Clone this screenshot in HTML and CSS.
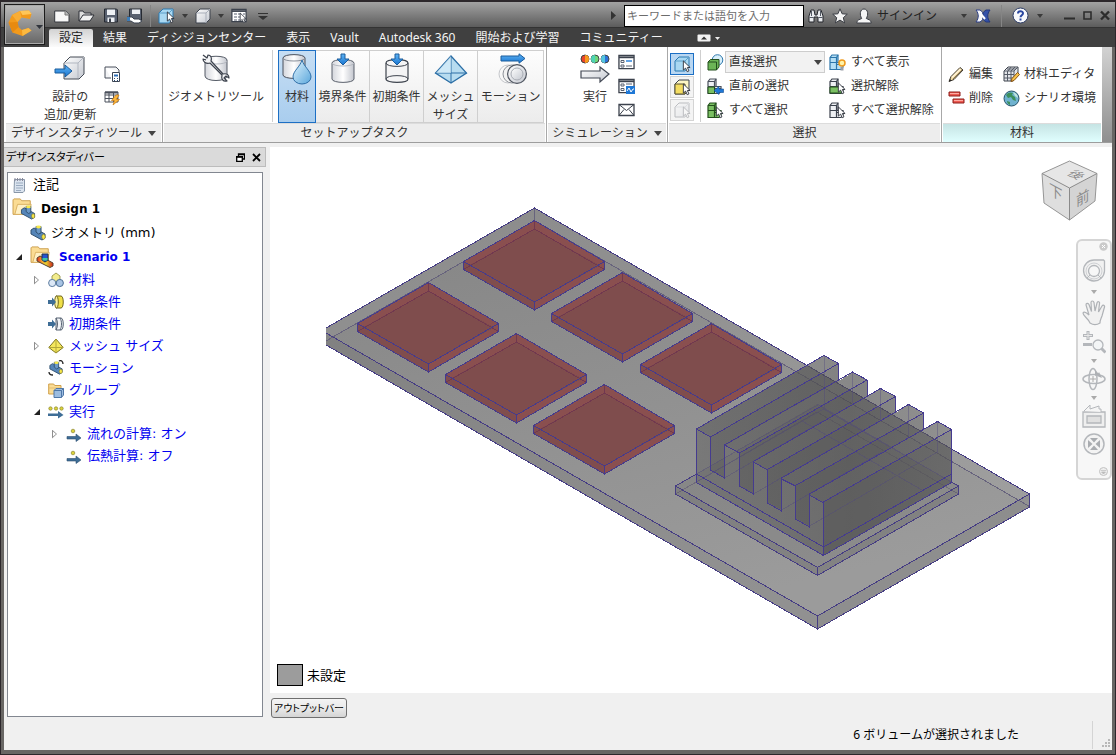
FILE: index.html
```html
<!DOCTYPE html>
<html lang="ja">
<head>
<meta charset="utf-8">
<title>Design 1</title>
<link rel="stylesheet" href="styles.css">
</head>
<body>
<svg class="defs" aria-hidden="true">
  <defs>
    <linearGradient id="gWhite" x1="0" y1="0" x2="1" y2="1"><stop offset="0" stop-color="#fff"/><stop offset="1" stop-color="#c4c8d0"/></linearGradient>
    <linearGradient id="gBlue" x1="0" y1="0" x2="0" y2="1"><stop offset="0" stop-color="#5fb4f5"/><stop offset="1" stop-color="#1874cf"/></linearGradient>
    <linearGradient id="gCyl" x1="0" y1="0" x2="1" y2="0"><stop offset="0" stop-color="#d4d6dc"/><stop offset=".5" stop-color="#fff"/><stop offset="1" stop-color="#c3c6ce"/></linearGradient>
    <linearGradient id="gDrop" x1="0" y1="0" x2="1" y2="1"><stop offset="0" stop-color="#e2f4fd"/><stop offset="1" stop-color="#5aa7dc"/></linearGradient>
    <linearGradient id="gRain" x1="0" y1="0" x2="1" y2="0"><stop offset="0" stop-color="#e03020"/><stop offset=".3" stop-color="#f5a030"/><stop offset=".55" stop-color="#e8d530"/><stop offset="1" stop-color="#d02018"/></linearGradient>
    <symbol id="cursor" viewBox="0 0 10 14"><path d="M1.500 .8V11l2.500-2.200 1.800 4 1.900-.9L6 8.100h3z" fill="#fff" stroke="#2b303a" stroke-width="1"/></symbol>
    <symbol id="cube" viewBox="0 0 16 16"><path d="M1 5 5 1h10v10l-4 4H1z" fill="url(#gWhite)" stroke="#3c424d" stroke-linejoin="round"/><path d="M1.500 5H11v10M11 5l4-4" fill="none" stroke="#a9afba"/></symbol>
    <symbol id="cubeBlue" viewBox="0 0 16 16"><path d="M1 5 5 1h10v10l-4 4H1z" fill="#a9d8f2" stroke="#2b78b0" stroke-linejoin="round"/><path d="M1.500 5H11v10M11 5l4-4" fill="none" stroke="#5c9fc9"/></symbol>
    <symbol id="pipe" viewBox="0 0 16 16"><path d="M1 5 4 3l11 6v4l-3 2L1 9z" fill="#5585b8" stroke="#31506f"/><path d="M6 1.500h5V8l-2.500 1L6 7z" fill="#6a98c8" stroke="#31506f"/><ellipse cx="8.500" cy="2" rx="2.500" ry="1.400" fill="#f7e84a"/><ellipse cx="13.500" cy="11.800" rx="1.700" ry="2.500" fill="#f7e84a" stroke="#8a7a20" stroke-width=".6"/></symbol>
    <symbol id="folder" viewBox="0 0 24 22"><path d="M1 18V2l1-1h7l1.500 2H20v15z" fill="#fbdc94" stroke="#c99b48"/><path d="M3 18 6 7h15l-2 11z" fill="#fff0c4" stroke="#d8ae5e"/></symbol>
    <symbol id="list" viewBox="0 0 18 16"><path d="M1 1h16v14H1z" fill="#fff" stroke="#3c424d" stroke-width="1.400"/><path d="M1 3h16" stroke="#3c424d" stroke-width="2"/></symbol>
    <symbol id="boxes" viewBox="0 0 17 17"><path d="M1 3.500l2-2.500h6v7.500h5l0 0V13l-2 2.500H1z" stroke-width="1.200"/><path d="M1 8.500h8M1 3.500h6.500L9 1M7.500 3.500v12M7.500 10.500H14" fill="none" stroke-width="1.200"/></symbol>
    <symbol id="step" viewBox="0 0 16 14"><circle cx="7" cy="3" r="1.800" fill="#dcd43a" stroke="#8a8430" stroke-width=".7"/><path d="M1 8.500h9V6l5 4-5 3.500V11H1z" fill="#3e6d96" stroke="#2c4f70" stroke-width=".6"/></symbol>
  </defs>
</svg>

<div class="window">
  <header class="head">
    <button class="app" aria-label="アプリケーション メニュー">
      <svg width="38" height="32" viewBox="0 0 38 32"><path d="M15 2 24 1.500 26.500 5 25 10l-8.500-1.500L12.500 13l1 5 3.500 3 6.500-2 3 2.500-9 5.500-10-3.500-4-10L7 6z" fill="#f29a1c"/><path d="M15 2l9-.5 2.500 3.500-9 1z" fill="#ffc658"/><path d="M7 6l8-4 1.500 6.500L12.500 13z" fill="#f8ad36"/><path d="M3.500 13.500l9-.5 1 5-6 5.500z" fill="#e88a10"/><path d="M17 21l6.500-2 3 2.500-9 5.500z" fill="#fcb940"/><path d="M31 16h7l-3.500 4z" fill="#30343c"/></svg>
    </button>
    <div class="titlebar">
      <div class="quick">
        <button aria-label="新規"><svg width="16" height="16"><path d="M.7 3h11L15 6.500V14H.7z" fill="#f7f7f7" stroke="#34373d"/><path d="M11 3v4h4" fill="#bbb" stroke="#777"/></svg></button>
        <button aria-label="開く"><svg width="17" height="16"><path d="M1 13V3h4l1.500 2H13v3" fill="#ddd" stroke="#2e3138"/><path d="M1 13 5 7h11l-4 6z" fill="#f1f1f1" stroke="#2e3138"/></svg></button>
        <button aria-label="保存"><svg width="16" height="16"><path d="M1.500 1h12l1 1v12h-13z" fill="#596170" stroke="#262a32"/><path d="M4 1.500h8V7H4zM4.500 9.500h7V14h-7z" fill="#eef1f5"/><path d="M6 10.500h2V14H6z" fill="#3d4450"/></svg></button>
        <button aria-label="名前を付けて保存"><svg width="16" height="16"><path d="M2.500 1h12v11h-12z" fill="#596170" stroke="#262a32"/><path d="M5 1.500h8V6H5z" fill="#eef1f5"/><path d="M0 9h5l2 2h5l3 2-3 2H7l-3-2H0z" fill="#fff" stroke="#3a4350"/><path d="M0 9h3v4H0z" fill="#3c7cb8"/></svg></button>
      </div>
      <span class="sep"></span>
      <div class="quick quick-b">
        <button aria-label="ボリューム選択"><svg width="17" height="16"><use href="#cubeBlue" width="16" height="16"/><use href="#cursor" x="8" y="3" width="9" height="13"/></svg></button>
        <button class="dd" aria-label="選択オプション"><i class="tri"></i></button>
        <button aria-label="表示スタイル"><svg width="16" height="16"><use href="#cube" width="16" height="16"/></svg></button>
        <button class="dd" aria-label="表示オプション"><i class="tri"></i></button>
        <button aria-label="一覧"><svg width="17" height="16"><use href="#list" width="16" height="15"/><path d="M3 6h3M3 9h3M3 12h3M7 6h3M7 9h2M7 12h2M12 6h2" stroke="#596170"/><use href="#cursor" x="8" y="4" width="8" height="12"/></svg></button>
        <button class="dd more" aria-label="カスタマイズ"><svg width="10" height="10"><path d="M0 2.500h10" stroke="#333"/><path d="M0 5h10L5 9z" fill="#333"/></svg></button>
      </div>
      <div class="info">
        <svg width="5" height="9"><path d="M0 0l5 4.500L0 9z" fill="#333"/></svg>
        <input class="search" type="text" aria-label="検索" placeholder="キーワードまたは語句を入力">
        <button aria-label="検索"><svg width="16" height="16"><path d="M1 8 3 2h3l1 5h2l1-5h3l2 6v6h-5V9H6v5H1z" fill="#e9ebee" stroke="#24272d"/><path d="M1.500 9.500h4M10.500 9.500h4M3.500 3v5M12.500 3v5" stroke="#555b66"/></svg></button>
        <button aria-label="お気に入り"><svg width="16" height="16"><path d="M8 .8l2.100 5 5.200.4-4 3.500 1.300 5.200L8 12.100l-4.600 2.800 1.300-5.200-4-3.500 5.200-.4z" fill="#f5f5f5" stroke="#3a3d44"/></svg></button>
        <button class="signin"><svg width="16" height="16"><path d="M.7 15c0-3 3-3.500 5-4.500C3.500 7 3.800 1 8 1s4.500 6 2.300 9.500c2 1 5 1.500 5 4.500z" fill="#f5f5f5" stroke="#3a3d44"/></svg>サインイン</button>
        <i class="tri tri-signin"></i>
        <button aria-label="Exchange"><svg width="16" height="14"><path d="M1 1h4c3 2 3 3 3 6s0 4-3 6H1c3-4 3-8 0-12z" fill="#f6f7fb" stroke="#2c3f86"/><path d="M15 1h-4C8 3 8 4 8 7s0 4 3 6h4c-3-4-3-8 0-12z" fill="#3451a8" stroke="#24387a"/><path d="M5 4l5 6" stroke="#fff" stroke-width="2"/></svg></button>
        <span class="sep sep-help"></span>
        <button aria-label="ヘルプ"><svg width="17" height="17"><circle cx="8.500" cy="8.500" r="7.500" fill="#f7f8fb" stroke="#2d3c66"/><path d="M6 6.500C6 3.500 11 3.500 11 6.300c0 1.900-2.500 1.900-2.500 3.900M8.500 11.500v2" fill="none" stroke="#2946a0" stroke-width="2"/></svg></button>
        <i class="tri tri-help"></i>
        <div class="winbtns">
          <button aria-label="最小化"><svg width="11" height="11"><path d="M0 8.500h11" stroke="#2d2d2d" stroke-width="2"/></svg></button>
          <button aria-label="最大化"><svg width="9" height="11"><path d="M1 2h7v7H1z" fill="none" stroke="#2d2d2d" stroke-width="1.600"/></svg></button>
          <button aria-label="閉じる"><svg width="10" height="11"><path d="M1 1.500l8 8M9 1.500l-8 8" stroke="#2d2d2d" stroke-width="2.400"/></svg></button>
        </div>
      </div>
    </div>
    <nav class="tabs">
      <button class="tab tab-on">設定</button>
      <button class="tab">結果</button>
      <button class="tab">ディシジョンセンター</button>
      <button class="tab">表示</button>
      <button class="tab">Vault</button>
      <button class="tab">Autodesk 360</button>
      <button class="tab">開始および学習</button>
      <button class="tab">コミュニティー</button>
      <button class="collapse" aria-label="リボンを最小化"><svg width="24" height="8"><rect x=".5" y=".5" width="13" height="7" rx="1" fill="#f2f2f2"/><path d="M4 5.500h6L7 2.500z" fill="#333"/><path d="M18 3h5l-2.500 3z" fill="#eee"/></svg></button>
    </nav>
  </header>

  <div class="frame">
  <section class="ribbon">
    <div class="panel p-study">
      <div class="pbody">
        <button class="big"><svg width="32" height="32"><path d="M10 10l6-6h14v17l-5 5H10z" fill="url(#gWhite)" stroke="#444a55" stroke-linejoin="round"/><path d="M10 10h14v15M24 10l6-6" fill="none" stroke="#b1b6c0"/><path d="M1 16h10v-4l7 6-7 6v-4H1z" fill="url(#gBlue)" stroke="#1b5c9c"/></svg><span>設計の<br>追加/更新</span></button>
        <div class="minis">
          <button aria-label="更新"><svg width="17" height="16"><path d="M1 1h11l3 3v2M1 1v11h6" fill="#f3f4f6" stroke="#4b515c"/><path d="M8.500 6.500h7v9h-7z" fill="#fff" stroke="#3a4453"/><path d="M10 8.500h4v2h-4z" fill="#2d6db5"/><path d="M10 12.500h1M13 12.500h1M10 14.500h1M13 14.500h1" stroke="#2d4d75"/></svg></button>
          <button aria-label="表"><svg width="17" height="16"><path d="M1 2h13v10H1zM1 5h13M1 8.500h13M5 2v10M9.500 2v10" fill="#fff" stroke="#4b515c"/><path d="M1 2.500h13" stroke="#4b515c" stroke-width="2"/><path d="M12 5 7.500 10.500h3L9 15l6.500-5.500h-3.200L15 5z" fill="#fdb83c" stroke="#c87a10" stroke-width=".7"/></svg></button>
        </div>
      </div>
      <div class="ptitle">デザインスタディツール<i class="tri tri-dark"></i></div>
    </div>

    <div class="panel p-setup">
      <div class="pbody">
        <button class="big"><svg width="32" height="32"><path d="M5 7c0-5 22-5 22 0v16c0 6-22 6-22 0z" fill="url(#gCyl)" stroke="#555b66"/><path d="M5 8c0 4 22 4 22 0" fill="none" stroke="#b4b8c0"/><path d="M3 2l4 3 1-3c3 0 4 3 3 6l12 13c4-1 6 1 6 4l-3-2-2 2 3 3c-4 1-6-2-5-6L10 10C6 11 3 9 3 6l3 1" fill="#f4f5f7" stroke="#3c424d" stroke-width="1.200" stroke-linejoin="round"/></svg><span>ジオメトリツール</span></button>
        <span class="vline"></span>
        <div class="tasks">
          <button class="big task task-on"><svg width="32" height="32"><path d="M2 5c0-4.500 22-4.500 22 0v17c0 4.500-22 4.500-22 0z" fill="url(#gCyl)" stroke="#4a505c"/><path d="M2 5c0 4 22 4 22 0" fill="none" stroke="#8a909a"/><path d="M21 7c2 7 9 11 9 17a9 7 0 0 1-18 0c0-6 7-10 9-17z" fill="url(#gDrop)" stroke="#2f6fa8"/></svg><span>材料</span></button>
          <button class="big task"><svg width="32" height="32"><path d="M5 10c0-4.500 22-4.500 22 0v16c0 4.500-22 4.500-22 0z" fill="url(#gCyl)" stroke="#5b616c"/><path d="M5 10c0 4 22 4 22 0" fill="none" stroke="#b4b8c0"/><path d="M14 1h4v5h4l-6 6-6-6h4z" fill="url(#gBlue)" stroke="#1b5c9c"/></svg><span>境界条件</span></button>
          <button class="big task"><svg width="32" height="32"><path d="M5 10c0-4.500 22-4.500 22 0v16c0 4.500-22 4.500-22 0z" fill="#f4f4f5" stroke="#3f454f" stroke-width="1.200"/><path d="M5 10c0 4.500 22 4.500 22 0M5 26c0-4.500 22-4.500 22 0" fill="none" stroke="#3f454f"/><path d="M14 1h4v5h4l-6 6-6-6h4z" fill="url(#gBlue)" stroke="#1b5c9c"/></svg><span>初期条件</span></button>
          <button class="big task"><svg width="34" height="32"><path d="M17 3 1.500 20 17 30l15.500-10z" fill="#b7dcf0" stroke="#2c6fa6" stroke-width="1.300"/><path d="M1.500 20h31M17 3v27" stroke="#2c6fa6"/><path d="M17 3v17H2z" fill="#e0f2fb" opacity=".6"/></svg><span>メッシュ<br>サイズ</span></button>
          <button class="big task"><svg width="32" height="32"><path d="M6 3h18V0.800l6 4.700-6 4.700V8H6z" fill="url(#gBlue)" stroke="#1b5c9c"/><circle cx="13" cy="21" r="9" fill="none" stroke="#c5c7cb"/><circle cx="17" cy="21" r="9" fill="#f2f2f2" stroke="#8e9299"/><circle cx="22" cy="21" r="9.400" fill="url(#gWhite)" stroke="#4d535e" stroke-width="1.200"/><circle cx="22" cy="21" r="6" fill="url(#gWhite)" stroke="#a8acb4"/></svg><span>モーション</span></button>
        </div>
      </div>
      <div class="ptitle">セットアップタスク</div>
    </div>

    <div class="panel p-sim">
      <div class="pbody">
        <button class="big"><svg width="32" height="32"><circle cx="6" cy="6" r="4" fill="#e8452a" stroke="#444"/><path d="M6 2a4 4 0 0 1 0 8z" fill="#f79a1e"/><circle cx="16" cy="6" r="4" fill="#6ed67a" stroke="#444"/><path d="M16 2a4 4 0 0 0 0 8z" fill="#4fd3b4"/><circle cx="26" cy="6" r="4" fill="#2c72d8" stroke="#444"/><path d="M26 2a4 4 0 0 0 0 8z" fill="#55c5dd"/><path d="M2 18h19v-4l9 7-9 8v-4H2z" fill="url(#gWhite)" stroke="#434955" stroke-width="1.200"/></svg><span>実行</span></button>
        <div class="minis">
          <button aria-label="ジョブ"><svg width="17" height="16"><use href="#list" width="17" height="16"/><path d="M3 6.500h3v2H3zM3 11h3v2H3z" fill="none" stroke="#596170"/><path d="M8 7h6" stroke="#2f86dd" stroke-width="1.500"/><path d="M8 12h6" stroke="#596170"/></svg></button>
          <button aria-label="モニター"><svg width="17" height="16"><use href="#list" width="17" height="16"/><path d="M3 6h3v2H3zM3 10.500h3v2H3zM8 6h6" fill="none" stroke="#596170"/><path d="M8 8h9v8H8z" fill="#1f78d6"/><path d="M9 13l2-3 2 4 2-3h1" stroke="#fff" fill="none"/></svg></button>
          <button aria-label="通知"><svg width="17" height="16"><path d="M1 2.500h15v11H1z" fill="#fff" stroke="#3c424d" stroke-width="1.300"/><path d="M1 2.500l7.500 6 7.500-6M1 13.500l5-6M16 13.500l-5-6" fill="none" stroke="#3c424d"/></svg></button>
        </div>
      </div>
      <div class="ptitle">シミュレーション<i class="tri tri-dark"></i></div>
    </div>

    <div class="panel p-select">
      <div class="pbody">
        <div class="modes">
          <button class="mode mode-on" aria-label="ボリューム"><svg width="18" height="17"><use href="#cubeBlue" x="1" width="16" height="16"/><use href="#cursor" x="9" y="4" width="9" height="13"/></svg></button>
          <button class="mode" aria-label="サーフェス"><svg width="18" height="17"><path d="M2 5 6 1h10v10l-4 4H2z" fill="#fdf6c4" stroke="#3c424d"/><path d="M2 5h10v10H2z" fill="#f4dd62" stroke="#5b5530"/><use href="#cursor" x="9" y="4" width="9" height="13"/></svg></button>
          <button class="mode mode-off" aria-label="エッジ" disabled><svg width="18" height="17"><use href="#cube" x="1" width="16" height="16"/><use href="#cursor" x="9" y="4" width="9" height="13"/></svg></button>
        </div>
        <span class="vline"></span>
        <div class="rows">
          <div class="row"><svg width="17" height="17"><circle cx="10.500" cy="6" r="5.300" fill="#d8effa" stroke="#2f79ad"/><path d="M1 8l2.500-2.500H12V13l-2.500 3H1z" fill="#6cb556" stroke="#234f1c"/><path d="M1 8h8.500v8" fill="none" stroke="#234f1c"/></svg>
            <select class="combo" aria-label="選択方法"><option>直接選択</option></select></div>
          <button class="row"><svg width="17" height="17"><use href="#boxes" width="17" height="17" fill="#eef0f3" stroke="#4a505c"/><path d="M1 9h6.500v6.500H1z" fill="#7bc063" stroke="#234f1c"/><path d="M7 12.500l5-4V11h4.500v3.500H12V16.500z" fill="#1f78d6" stroke="#134e90" stroke-width=".6"/></svg>直前の選択</button>
          <button class="row"><svg width="17" height="17"><use href="#boxes" width="17" height="17" fill="#7bc063" stroke="#234f1c"/><use href="#cursor" x="8" y="4" width="9" height="13"/></svg>すべて選択</button>
        </div>
        <div class="rows">
          <button class="row"><svg width="17" height="17"><use href="#boxes" width="17" height="17" fill="#b5dff5" stroke="#2c76ab"/><circle cx="13" cy="9" r="3" fill="#fff3a8" stroke="#f09a1c" stroke-width="1.500"/><path d="M11.500 13h3v3.500h-3z" fill="#9a9ea6"/></svg>すべて表示</button>
          <button class="row"><svg width="17" height="17"><use href="#boxes" width="17" height="17" fill="#eef0f3" stroke="#3c424d"/><path d="M1 9h12v6H1z" fill="#7bc063" stroke="#234f1c"/><use href="#cursor" x="8" y="4" width="9" height="13"/></svg>選択解除</button>
          <button class="row"><svg width="17" height="17"><use href="#boxes" width="17" height="17" fill="#eef0f3" stroke="#3c424d"/><use href="#cursor" x="8" y="4" width="9" height="13"/></svg>すべて選択解除</button>
        </div>
      </div>
      <div class="ptitle">選択</div>
    </div>

    <div class="panel p-mat">
      <div class="pbody">
        <div class="rows">
          <button class="row"><svg width="17" height="17"><path d="M1 15.500l2-5L12 1.500l3 2.500-9 9.500z" fill="#f0d9a0" stroke="#3f3a30"/><path d="M4 11.500 12.500 3" stroke="#fff3d8" stroke-width="1.500"/><path d="M5 13 14 4" stroke="#8a7650"/><path d="M1 15.500l1-2.500 1.500 1.500z" fill="#222"/></svg>編集</button>
          <button class="row"><svg width="17" height="17"><path d="M1 2h11v4H1zM5 9h11v4H5z" fill="#ee5b52" stroke="#8d1c18"/><path d="M2 3.500h9M6 10.500h9" stroke="#ffaaa2"/></svg>削除</button>
        </div>
        <div class="rows">
          <button class="row"><svg width="17" height="17"><path d="M1 5l4-4h10v7l-5 7H1z" fill="#e3e5e9" stroke="#3c424d"/><path d="M1 5h10l4-4M1 8.500h10M1 12h9M4.500 5v10M8 5v10M11 5v8M4 3h9M8 1 5 5M12 1 8 5" fill="none" stroke="#555b66"/><path d="M8 15.500l1-3 5.500-6 2 2-5.500 6z" fill="#f8c34c" stroke="#8a5412"/></svg>材料エディタ</button>
          <button class="row"><svg width="17" height="17"><circle cx="8.500" cy="8.500" r="7.500" fill="#6fb2cf" stroke="#27546b"/><path d="M3 5c2-3 5-3 7-2l-1 2 3 2 1 4-3-1-2-3-3 1zM4 11l3 1v3C5 14 4 13 4 11z" fill="#3c8f5c"/><path d="M10 2c3 1 5 3 5 6l-3-2z" fill="#bfe6dd"/></svg>シナリオ環境</button>
        </div>
      </div>
      <div class="ptitle">材料</div>
    </div>
    <div class="ribbon-end"></div>
  </section>

  <main class="work">
    <aside class="dock">
      <div class="dock-title"><span>デザインスタディバー</span>
        <button aria-label="フロート"><svg width="9" height="9"><path d="M2.500 3V.8h6V6H7M2 1.500h7" fill="none" stroke="#000" stroke-width="1.300"/><path d="M.7 3.700h5.600v4.600H.7z" fill="#fff" stroke="#000" stroke-width="1.300"/><path d="M0 4h7" stroke="#000" stroke-width="1.500"/></svg></button>
        <button aria-label="閉じる"><svg width="9" height="9"><path d="M1 1l7 7M8 1l-7 7" stroke="#000" stroke-width="1.800"/></svg></button>
      </div>
      <ul class="tree">
        <li class="n n0 tall"><svg width="16" height="16"><path d="M2.500 2.500h10V14l-1.500 1.500H2z" fill="#dbe4ef" stroke="#8896a8"/><path d="M4 6h7M4 8.500h7M4 11h7M4 13.500h5" stroke="#9aabc0"/><path d="M3 1v3M5.500 1v3M8 1v3M10.500 1v3" stroke="#889"/></svg>注記</li>
        <li class="n n0 tall bold"><svg width="24" height="22"><use href="#folder" width="22" height="20"/><use href="#pipe" x="8" y="7" width="16" height="15"/></svg>Design 1</li>
        <li class="n n1 tall"><i class="ex"></i><svg width="16" height="16"><use href="#pipe" width="16" height="16"/></svg>ジオメトリ (mm)</li>
        <li class="n n1 tall bold blue"><i class="ex open"></i><svg width="24" height="22"><use href="#folder" width="22" height="20"/><path d="M7 12l3-2 13 7v3l-3 1.500L7 15z" fill="url(#gRain)" stroke="#543"/><path d="M12 8h6v6l-3 2-3-2z" fill="#2452d2" stroke="#234"/><path d="M12.500 12h5v2.500h-5z" fill="#3fc6a0"/></svg>Scenario 1</li>
        <li class="n n2 blue"><i class="ex closed"></i><svg width="16" height="16"><path d="M8 1l4 3v4l-4 2-4-2V4z" fill="#f2ec8c" stroke="#8b8a3a" stroke-width=".8"/><circle cx="4.200" cy="11" r="3.600" fill="#dce8f6" stroke="#5e7da0"/><circle cx="11.800" cy="11" r="3.600" fill="#a8c4e4" stroke="#4d6f96"/></svg>材料</li>
        <li class="n n2 blue"><i class="ex"></i><svg width="16" height="16"><path d="M8 2h5c3 0 3 12 0 12H8z" fill="#efdf48" stroke="#6f661c"/><ellipse cx="8.500" cy="8" rx="1.800" ry="6" fill="#faf3a0" stroke="#6f661c"/><path d="M0 6h4V3.500L8 8l-4 4.500V10H0z" fill="#3e6d96"/></svg>境界条件</li>
        <li class="n n2 blue"><i class="ex"></i><svg width="16" height="16"><path d="M8 2h5c3 0 3 12 0 12H8z" fill="#f2f4f7" stroke="#566273"/><path d="M12 2c2 3 2 9 0 12M8 2c2 3 2 9 0 12" fill="none" stroke="#566273"/><path d="M0 6h4V3.500L8 8l-4 4.500V10H0z" fill="#3e6d96"/></svg>初期条件</li>
        <li class="n n2 blue"><i class="ex closed"></i><svg width="16" height="16"><path d="M8 1 .8 9.500 8 15l7.200-5.500z" fill="#f4e75c" stroke="#7d7520"/><path d="M8 1v14M1 9.500h14" stroke="#b3a838"/></svg>メッシュ サイズ</li>
        <li class="n n2 blue"><i class="ex"></i><svg width="16" height="16"><use href="#pipe" y="1" width="16" height="14"/><path d="M11 1c2-1 4 0 4 3M1 12c0 2 1 3 4 3" fill="none" stroke="#222" stroke-width="1.300"/></svg>モーション</li>
        <li class="n n2 blue"><i class="ex"></i><svg width="16" height="16"><path d="M.7 12V2h5l1 1.500H13V12z" fill="#fbdc94" stroke="#d0a04a"/><path d="M.7 6H13" stroke="#e3bd6c"/><path d="M6 8.500 8 6.500h7.500V13L13.500 15.500H6z" fill="#9dbde0" stroke="#4e77a8"/><path d="M6 8.500h7.500v7M13.500 8.500l2-2" fill="none" stroke="#4e77a8"/></svg>グループ</li>
        <li class="n n2 blue"><i class="ex open"></i><svg width="16" height="16"><path d="M0 9.500h10V7l5.500 4-5.500 3.500V12H0z" fill="#3e6d96"/><g fill="#dcd43a" stroke="#8a8430" stroke-width=".7"><circle cx="2.500" cy="4.500" r="1.700"/><circle cx="8" cy="4.500" r="1.700"/><circle cx="13.500" cy="4.500" r="1.700"/></g></svg>実行</li>
        <li class="n n3 blue"><i class="ex closed"></i><svg width="16" height="16"><use href="#step" y="2" width="16" height="14"/></svg>流れの計算: オン</li>
        <li class="n n3 blue"><i class="ex"></i><svg width="16" height="16"><use href="#step" y="2" width="16" height="14"/></svg>伝熱計算: オフ</li>
      </ul>
    </aside>

    <div class="stage">
      <div class="view">
        <svg class="model" viewBox="270 147 842 546" shape-rendering="crispEdges">
          <defs>
            <linearGradient id="gBoard" x1="0" y1="0" x2=".4" y2="1"><stop offset="0" stop-color="#848484"/><stop offset="1" stop-color="#9b9b9b"/></linearGradient>
            <linearGradient id="gFin" x1="0" y1="0" x2="1" y2="0"><stop offset="0" stop-color="#606060"/><stop offset=".6" stop-color="#505050"/><stop offset="1" stop-color="#5c5c5c"/></linearGradient>
            <g id="chip">
              <path d="M0 0 70 41v8L0 89.500-71 49v-8z" fill="#8a4f4f"/>
              <path d="M-71 41 0 81.500v8L-71 49z" fill="#804d4d"/>
              <path d="M0 8.500 66 45 0 81.500-66 45z" fill="#7f4d4d"/>
              <path d="M-71 49 0 8.500 70 49M0 0v8.500" fill="none" stroke="#71384f"/>
              <path d="M0 0 70 41v8L0 89.500-71 49v-8zM-71 41 0 81.500 70 41M0 81.500v8" fill="none" stroke="#463b8c"/>
            </g>
          </defs>
          <path d="M326 328 534.500 208l495 286v13l-212 122L326 345z" fill="url(#gBoard)"/>
          <path d="M326 328 534.500 208l495 286v13L534.500 220.500 326 341z" fill="#fff" opacity=".05"/>
          <path d="M326 333 817.500 616v13L326 345z" opacity=".06"/>
          <path d="M817.500 616l212-122v13l-212 122z" opacity=".08"/>
          <path d="M326 341 534.500 220.500l495 286M534.500 208v13" fill="none" stroke="#67637d"/>
          <path d="M326 328 534.500 208l495 286v13l-212 122L326 345M326 333l491.500 283 212-122M817.500 616v13" fill="none" stroke="#463d84"/>
          <use href="#chip" x="534.500" y="220.500"/><use href="#chip" x="428.500" y="282.500"/>
          <use href="#chip" x="622.500" y="272.500"/><use href="#chip" x="516.500" y="333.500"/>
          <use href="#chip" x="711.500" y="323.500"/><use href="#chip" x="604.500" y="384.500"/>

          <path d="M675.500 486 817 404l141.500 82v8l-141 81.500-142-82z" fill="#5f5f5f" opacity=".25"/>
          <path d="M675.500 494 817 412l141.500 82" fill="none" stroke="#57506f" opacity=".5"/>
          <path d="M675.500 486l142 81.500v8l-142-82zM817.500 567.500l141-81.500v8l-141 81.500z" opacity=".06"/>
          <path d="M696.500 474 675.500 486l142 81.500 141-81.500-7-4M675.500 486v8l142 81.500 141-81.500v-8M817.500 567.500v8" fill="none" stroke="#463d84"/>
          <path d="M696.500 482v-53l127.500-73.500 14.500 8V381l14-8.500 14.500 8V397l14-8.500 14.500 8V413l13.500-8.500 14.500 8.500v17l14-8.500 14 8v53l-127.500 73z" fill="url(#gFin)" opacity=".68"/>
          <g fill="#2d2d2d" opacity=".07">
            <path d="M710.500 437 838.500 363.500V381L724.500 446v32l-14-8zM739.500 453 867 380v17L753.500 462v32l-14-8zM767.500 469.500 895.500 396.500V413L781.500 478v32l-14-8zM795.500 485.500 923.500 413v17L809.500 494v32l-14-8zM823.500 502l128-72v52l-128 73z"/>
          </g>
          <path d="M696.500 429l14 8v33l14 8v-33l15 8v33l14 8v-32l14 8v33l14 8v-32l14 7v33l14 8v-32l14 8v53l-127-73z" fill="#aaa" opacity=".14"/>
          <g fill="none" stroke="#51497c" opacity=".4">
            <path d="M696.500 482l127-73 128 73M724.500 478l100-58M753.500 494l100-58M781.500 510l100-58M809.500 526l128-74M696.500 474l121-69M824 356v53M852.500 372v31M880.500 388v33M908.500 404v33M937.500 421v32M817 404l141 82M802 421l120 69"/>
          </g>
          <g fill="none" stroke="#453b8f">
            <path d="M696.500 482v-53l127.500-73.500 14.500 8V381M724.500 445l128-73 14.500 8V397M753.500 461.500l127-73 15 8V413M781.500 478l127-73.500 15 8.500v17M809.500 494l128-72.500 14 8v53l-128 73-127-73"/>
            <path d="M696.500 429l14 8v33l14 8v-33l15 8v33l14 8v-32l14 8v33l14 8v-32l14 7v33l14 8v-32l14 8v53M710.500 437l128-73.500M739.500 453 867 380M767.500 469.500l128-73M795.500 485.500 923.500 413M823.500 502l128-72.500M696.500 474l127 73 128-73"/>
          </g>
        </svg>

        <svg class="viewcube" width="58" height="62" role="img" aria-label="ビューキューブ">
          <path d="M2 13.500 29.500 1 57 13.500 29.500 28z" fill="#e6e6e6"/><path d="M2 13.500 29.500 28v32L4 43z" fill="#dedede"/><path d="M57 13.500 29.500 28v32L55 41z" fill="#d4d4d4"/>
          <path d="M2 13.500 29.500 1 57 13.500 55 41 29.500 60 4 43z" fill="none" stroke="#969696"/><path d="M2 13.500 29.500 28 57 13.500M29.500 28v32" fill="none" stroke="#8a8a8a"/>
          <g class="facetext"><text transform="matrix(.9 .5 0 1 9 34)">下</text><text transform="matrix(.9 -.5 0 1 36 47)">前</text><text transform="matrix(.8 .4 -.8 .4 26 14)">後</text></g>
        </svg>

        <div class="navbar">
          <button aria-label="閉じる" class="corner"><svg width="9" height="9"><circle cx="4.500" cy="4.500" r="4.200" fill="#cacaca"/><path d="M3 3l3 3M6 3L3 6" stroke="#fff"/></svg></button>
          <button aria-label="ホイール"><svg width="24" height="24"><path d="M12 1h9.500l1 1v10A10.500 10.500 0 1 1 12 1z" fill="#f1f1f1" stroke="#b4b7bb" stroke-width="1.300"/><circle cx="12" cy="12" r="8" fill="none" stroke="#cfd1d4"/><circle cx="12" cy="12" r="5.500" fill="#f7f7f7" stroke="#b4b7bb" stroke-width="1.300"/><path d="M8 16l-3 3M16 16l3 3" stroke="#b4b7bb"/></svg></button>
          <i class="tri tri-nav"></i>
          <button aria-label="画面移動"><svg width="24" height="26"><path d="M8 23C6 18 1 16 1 13c1-2 4 0 6 2L4 5c0-2 2-2 3-.5l2.500 7L9 2.500c0-2 2.500-2 3 0l1 8.500 2-8c.5-2 3-1.500 2.500.5L16.500 12 20 6c1-1.500 3-.5 2.500 1L20 16c-1 3-2 4-2 7-3 2-7 2-10 0z" fill="#f1f1f1" stroke="#afb2b6" stroke-width="1.200"/></svg></button>
          <button aria-label="ズーム" class="gap-top"><svg width="24" height="24"><path d="M6 1v9M1 5.500h10M1 14.500h9" stroke="#b4b7bb" stroke-width="3"/><path d="M6 2v7M2 5.500h8" stroke="#e8e8e8"/><circle cx="16" cy="15" r="5" fill="#f3f5f6" stroke="#b4b7bb" stroke-width="1.300"/><path d="M19.500 18.500l4 4" stroke="#b4b7bb" stroke-width="3"/></svg></button>
          <i class="tri tri-nav"></i>
          <button aria-label="オービット"><svg width="24" height="24"><ellipse cx="11" cy="12" rx="4" ry="10.500" fill="none" stroke="#b4b7bb" stroke-width="1.500"/><ellipse cx="12" cy="12" rx="11" ry="4.500" fill="none" stroke="#b4b7bb" stroke-width="1.500"/><path d="M11 9v6M8 12h6" stroke="#aaa"/><path d="M13 3l4 4-4 2zM17 5l3 6-5-2z" fill="#aeb1b5"/></svg></button>
          <i class="tri tri-nav"></i>
          <button aria-label="前のビュー"><svg width="24" height="24"><path d="M1 8h22v15H1z" fill="#efefef" stroke="#b4b7bb" stroke-width="1.300"/><path d="M5 12h14v7H5z" fill="#e0e0e0" stroke="#b4b7bb" stroke-width="1.300"/><path d="M2 7l6-6v4l9-3v3h2v3" fill="#f5f5f5" stroke="#b4b7bb"/></svg></button>
          <button aria-label="全体表示" class="gap-top"><svg width="24" height="24"><circle cx="12" cy="12" r="10" fill="#f3f3f3" stroke="#b4b7bb" stroke-width="1.500"/><path d="M8 6h8l-4 4.500zM8 18h8l-4-4.500zM6 8v8l4.500-4zM18 8v8l-4.500-4z" fill="#a9acb0"/></svg></button>
          <button aria-label="オプション" class="corner corner-b"><svg width="9" height="9"><circle cx="4.500" cy="4.500" r="4" fill="#eee" stroke="#c2c2c2"/><path d="M2 3.500h5M2.500 5h4l-2 2z" stroke="#bbb" fill="#bbb" stroke-width=".7"/></svg></button>
        </div>

        <div class="legend"><span class="swatch"></span>未設定</div>
      </div>
      <div class="outrow"><button class="outbtn">アウトプットバー</button></div>
    </div>
  </main>

  <footer class="status">
    <span class="msg">6 ボリュームが選択されました</span>
    <span class="stline"></span>
    <svg class="grip" width="9" height="9"><path d="M7 0h2v2H7zM4 3h2v2H4zM7 3h2v2H7zM1 6h2v2H1zM4 6h2v2H4zM7 6h2v2H7z" fill="#b8b8b8"/></svg>
  </footer>
  </div>
</div>
</body>
</html>
```
FILE: styles.css
```css
* { box-sizing: border-box; }
html, body { height: 100%; }
body {
  margin: 0;
  font: 12px/18px "Noto Sans", "Noto Sans CJK JP", sans-serif;
  color: #333;
  background: #666;
}
button {
  border: 0;
  padding: 0;
  background: none;
  font: inherit;
  color: inherit;
  white-space: nowrap;
}
svg { display: block; flex: none; }
.defs { position: absolute; width: 0; height: 0; }

.window {
  display: flex;
  flex-direction: column;
  min-height: 100vh;
  border: 1px solid #2c272b;
  border-top-width: 2px;
  background: #686664;
}

/* Title bar and tabs */
.head {
  display: grid;
  grid-template-columns: auto 1fr;
  grid-template-rows: 27px 18px;
  background: linear-gradient(#a2a2a2, #5c5c5c 25px, #333 25px, #333 26px, #404040 26px);
}
.app {
  grid-row: 1 / 3;
  width: 41px;
  margin: 2px 0 2px 3px;
  border: 1px solid #1c1c1c;
  background: linear-gradient(#bcbcbc, #666);
  box-shadow: inset 0 0 0 1px #aaa;
}
.titlebar { display: flex; align-items: center; min-width: 0; }
.quick { display: flex; align-items: center; gap: 8px; padding-left: 9px; }
.quick-b { gap: 6px; padding-left: 0; }
.sep { width: 1px; height: 22px; margin: 0 7px; background: #858585; }
.tri {
  display: inline-block;
  border: 3px solid transparent;
  border-top: 4px solid #3a3a3a;
  border-bottom: 0;
}
.dd { width: 8px; display: flex; justify-content: center; }
.more { width: 10px; margin-left: 4px; }
.info { display: flex; align-items: center; gap: 8px; margin-left: auto; }
.search {
  width: 180px;
  height: 22px;
  margin-right: -4px;
  padding: 0 2px;
  border: 1px solid #000;
  background: #fff;
  font: 11px/20px "Noto Sans", "Noto Sans CJK JP", sans-serif;
}
.search::placeholder { color: #6c6c6c; opacity: 1; }
.signin { display: flex; align-items: center; gap: 5px; color: #222; }
.tri-signin { margin-left: 16px; }
.sep-help { margin: 0 2px; }
.winbtns { display: flex; gap: 8px; margin: 0 5px 0 13px; }
.tabs {
  display: flex;
  align-items: stretch;
  margin-right: 3px;
  padding-left: 4px;
  color: #f5f5f5;
}
.tab { padding: 0 10px; line-height: 18px; }
.tab-on {
  border-radius: 2px 2px 0 0;
  color: #222;
  background: linear-gradient(#d2d2d2, #fbfbfb);
}
.collapse { display: flex; align-items: center; margin-left: 24px; }

.frame {
  display: flex;
  flex: 1;
  flex-direction: column;
  margin: 0 3px 4px;
  background: #f0f0f0;
}

/* Ribbon */
.ribbon {
  display: flex;
  border-bottom: 1px solid #9d9d9d;
  background: #fff;
}
.panel {
  display: flex;
  flex-direction: column;
  border-right: 1px solid #a8a8a8;
  padding: 0 1px;
}
.pbody { display: flex; height: 76px; padding-top: 3px; }
.ptitle {
  display: flex;
  align-items: center;
  justify-content: center;
  gap: 6px;
  height: 19px;
  border-top: 1px solid #dcdcdc;
  background: #ededed;
}
.tri-dark { border-width: 5px 4px 0; border-top-color: #444; }
.big {
  display: flex;
  flex-direction: column;
  align-items: center;
  gap: 3px;
  padding-top: 3px;
}
.big span { line-height: 18px; }
.minis { display: flex; flex-direction: column; gap: 8px; padding-top: 4px; }
.vline { width: 1px; margin-bottom: 1px; background: #cfcfcf; }

.p-study { width: 159px; padding-left: 2px; }
.p-study .big { margin-left: 38px; }
.p-study .minis { padding: 16px 0 0 8px; }

.p-setup { width: 384px; }
.p-setup .vline { margin-left: 8px; }
.p-setup > .pbody > .big { margin-left: 4px; }
.tasks { display: flex; margin-left: 5px; }
.task {
  width: 54px;
  height: 73px;
  padding-top: 2px;
  border: 1px solid #cfcfcf;
  border-left-width: 0;
  background: linear-gradient(#fdfdfd, #ececec);
}
.task:last-child { width: 66px; }
.task-on {
  width: 38px;
  border: 1px solid #1c6fc4;
  background: linear-gradient(#c6def4, #a9cdee);
}

.p-sim { width: 121px; }
.p-sim .big { margin-left: 31px; }
.p-sim .minis { margin-left: 7px; }

.p-select { width: 274px; }
.modes { display: flex; flex-direction: column; gap: 1px; margin-left: 1px; padding-top: 3px; }
.mode {
  display: flex;
  align-items: center;
  justify-content: center;
  width: 24px;
  height: 22px;
  border: 1px solid #d4d4d4;
  background: #f4f4f4;
}
.mode-on { border-color: #1c6fc4; background: #b9d7f2; }
.mode-off svg { opacity: .3; }
.p-select .vline { margin: 0 6px 1px; }
.rows { display: flex; flex-direction: column; align-items: flex-start; }
.row { display: flex; align-items: center; gap: 5px; height: 24px; }
.combo {
  appearance: none;
  width: 100px;
  height: 22px;
  margin-left: -4px;
  padding: 0 3px;
  border: 1px solid #cdcdcd;
  border-radius: 0;
  color: #333;
  background: #f2f2f2;
  font: inherit;
}
.p-select div.row { position: relative; }
.p-select div.row::after {
  content: "";
  position: absolute;
  right: 3px;
  top: 10px;
  border: 4px solid transparent;
  border-top: 5px solid #444;
  border-bottom: 0;
  pointer-events: none;
}
.p-select .rows + .rows { margin-left: 4px; }

.p-mat { flex: 1; border-right: 0; }
.p-mat .pbody { gap: 10px; padding: 15px 0 0 5px; }
.p-mat .ptitle { background: linear-gradient(#c6e4e4, #e0ffff); }
.p-mat .row { gap: 4px; }
.ribbon-end { width: 10px; background: linear-gradient(#d2d2d2, #8f8f8f); }

/* Work area */
.work { display: flex; flex: 1; min-height: 0; padding-top: 4px; }
.dock { display: flex; flex-direction: column; width: 262px; margin-right: 4px; }
.dock-title {
  display: flex;
  align-items: center;
  gap: 7px;
  height: 20px;
  padding: 0 4px 0 2px;
  border: 1px solid #bcbcbc;
  border-left: 0;
  background: #dadada;
  color: #000;
  font-size: 11px;
  font-feature-settings: "palt";
}
.dock-title span { flex: 1; }
.tree {
  flex: 1;
  margin: 5px 3px 1px;
  padding: 0;
  border: 1px solid #828790;
  background: #fff;
  list-style: none;
}
.n {
  display: flex;
  align-items: center;
  gap: 5px;
  height: 22px;
  color: #000;
  font: 13px/22px "DejaVu Sans", "Noto Sans CJK JP", sans-serif;
  white-space: pre;
}
.tall { height: 24px; }
.bold { font-size: 12px; font-weight: bold; }
.blue { color: #0000f0; }
.n0 { padding-left: 4px; }
.n1 { padding-left: 4px; }
.n2 { padding-left: 22px; }
.n3 { padding-left: 40px; }
.ex { display: flex; justify-content: center; width: 13px; }
.open::before {
  content: "";
  border: 3px solid transparent;
  border-right-color: #222;
  border-bottom-color: #222;
}
.closed::before {
  content: "";
  width: 5px;
  height: 9px;
  background: #8f8f8f;
  clip-path: polygon(0 0, 100% 50%, 0 100%, 0 0, 1px 2px, 1px 7px, 4px 50%, 1px 2px);
}

.stage { display: flex; flex: 1; flex-direction: column; min-width: 0; }
.view { position: relative; flex: 1; min-height: 0; background: #fff; }
.model { position: absolute; width: 100%; height: 100%; }
.viewcube { position: absolute; top: 13px; right: 14px; }
.facetext { font-size: 15px; fill: #8c8c8c; }
.navbar {
  position: absolute;
  top: 92px;
  right: 0;
  display: flex;
  flex-direction: column;
  align-items: center;
  width: 36px;
  height: 241px;
  border: 2px solid #d5d5d5;
  border-radius: 6px;
  background: #f7f7f7;
}
.corner { align-self: flex-end; margin: 1px 2px 8px 0; }
.corner-b { margin: auto 2px 2px 0; }
.gap-top { margin-top: 4px; }
.tri-nav { margin: 7px 0 6px; border-top-color: #aaa; }
.tri-nav ~ .tri-nav { margin: 5px 0 4px; }
.legend {
  position: absolute;
  left: 7px;
  bottom: 7px;
  display: flex;
  align-items: center;
  gap: 4px;
  color: #000;
  font-size: 13px;
}
.swatch { width: 26px; height: 22px; border: 1px solid #000; background: #9c9c9c; }
.outrow { height: 25px; padding: 5px 1px 0; }
.outbtn {
  display: block;
  width: 76px;
  height: 20px;
  border: 1px solid #6f6f6f;
  border-radius: 3px;
  background: linear-gradient(#f4f4f4, #eaeaea 50%, #d4d4d4);
  color: #000;
  font-size: 10px;
  line-height: 18px;
  font-feature-settings: "palt";
}
.status { display: flex; align-items: center; height: 32px; padding-top: 2px; color: #000; }
.msg { margin-left: auto; }
.stline { width: 1px; height: 28px; margin: 0 8px 0 73px; background: #d4d4d4; }
.grip { align-self: flex-end; margin: 0 2px 2px 0; }
```
